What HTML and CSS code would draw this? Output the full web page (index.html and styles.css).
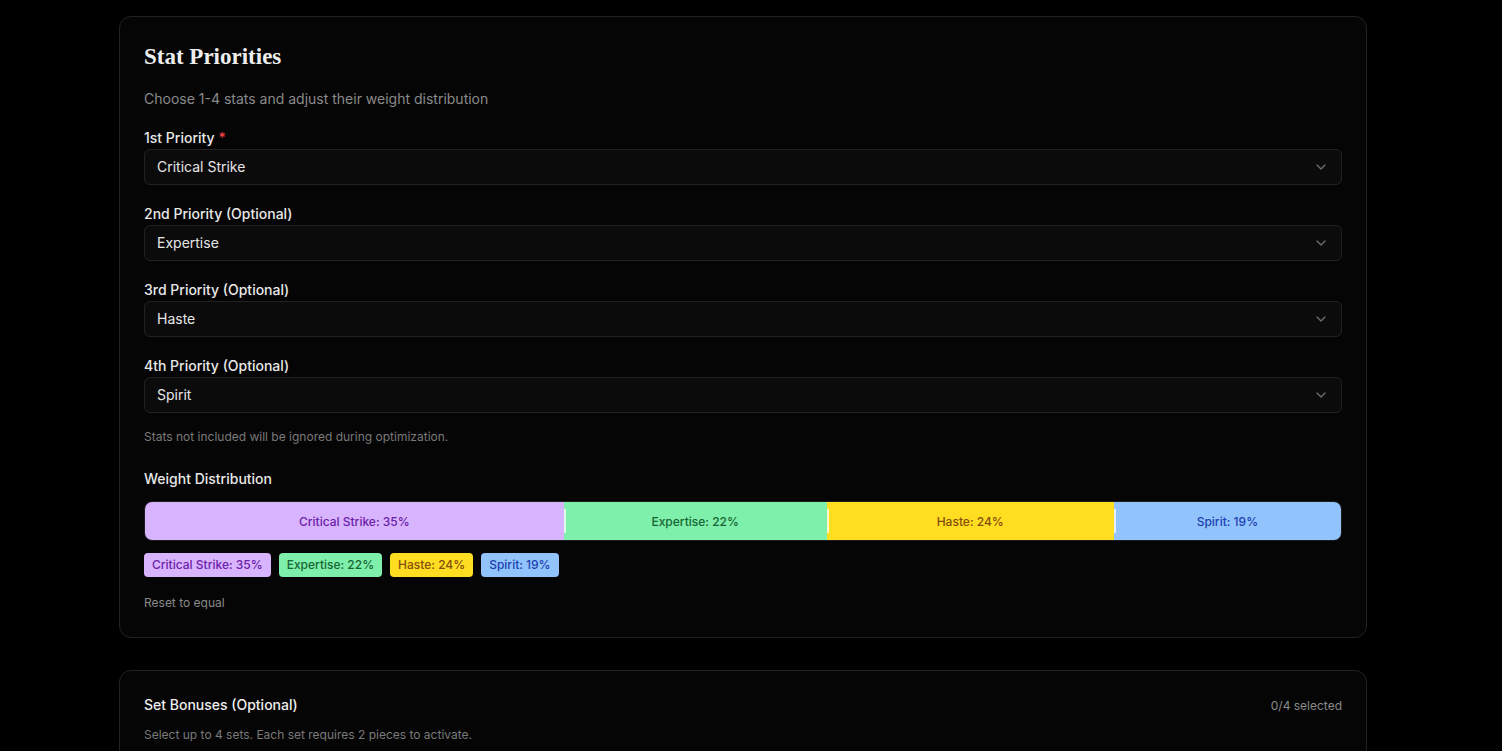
FILE: index.html
```html
<!DOCTYPE html>
<html lang="en">
<head>
  <meta charset="UTF-8" />
  <title>Stat Priorities</title>
  <link rel="stylesheet" href="styles.css">
</head>
<body>
  <div class="page">
    <section class="card">
      <h2 class="card-title">Stat Priorities</h2>
      <p class="card-desc">Choose 1-4 stats and adjust their weight distribution</p>

      <div class="field">
        <label class="field-label">1st Priority <span class="req">*</span></label>
        <div class="select">
          <span>Critical Strike</span>
          <svg class="chev" viewBox="0 0 24 24"><path d="m6 9 6 6 6-6"/></svg>
        </div>
      </div>

      <div class="field">
        <label class="field-label">2nd Priority (Optional)</label>
        <div class="select">
          <span>Expertise</span>
          <svg class="chev" viewBox="0 0 24 24"><path d="m6 9 6 6 6-6"/></svg>
        </div>
      </div>

      <div class="field">
        <label class="field-label">3rd Priority (Optional)</label>
        <div class="select">
          <span>Haste</span>
          <svg class="chev" viewBox="0 0 24 24"><path d="m6 9 6 6 6-6"/></svg>
        </div>
      </div>

      <div class="field">
        <label class="field-label">4th Priority (Optional)</label>
        <div class="select">
          <span>Spirit</span>
          <svg class="chev" viewBox="0 0 24 24"><path d="m6 9 6 6 6-6"/></svg>
        </div>
      </div>

      <p class="hint">Stats not included will be ignored during optimization.</p>

      <div class="weights">
        <div class="field-label">Weight Distribution</div>
        <div class="bar">
          <div class="seg crit" style="width: 35%">Critical Strike: 35%</div>
          <div class="seg exp" style="width: 22%"><span class="handle"></span>Expertise: 22%</div>
          <div class="seg haste" style="width: 24%"><span class="handle"></span>Haste: 24%</div>
          <div class="seg spirit" style="width: 19%"><span class="handle"></span>Spirit: 19%</div>
        </div>
        <div class="chips">
          <span class="chip crit">Critical Strike: 35%</span>
          <span class="chip exp">Expertise: 22%</span>
          <span class="chip haste">Haste: 24%</span>
          <span class="chip spirit">Spirit: 19%</span>
        </div>
        <div class="reset">Reset to equal</div>
      </div>
    </section>

    <section class="card">
      <div class="card-head">
        <div class="card-subtitle">Set Bonuses (Optional)</div>
        <div class="count">0/4 selected</div>
      </div>
      <p class="small-desc">Select up to 4 sets. Each set requires 2 pieces to activate.</p>
    </section>
  </div>
</body>
</html>
```

FILE: styles.css
```css
:root {
  --bg: #000;
  --card: #050505;
  --border: #222;
  --input: #0b0b0b;
  --text: #eeeeee;
  --muted: #8a8a8a;
}
body {
  margin: 0;
  background-color: var(--bg);
  color: var(--text);
  font-family: Inter, "Noto Sans", sans-serif;
}
.page {
  width: 1248px;
  margin-left: 119px;
  padding-top: 16px;
  display: flex;
  flex-direction: column;
  gap: 32px;
}
.card {
  background-color: var(--card);
  border: 1px solid var(--border);
  border-radius: 12px;
  padding: 24px;
}
.card-title {
  font-family: "Liberation Serif", serif;
  font-weight: 700;
  font-size: 23px;
  line-height: 32px;
  margin: 0;
  color: #eeeeee;
}
.card-desc {
  margin: 16px 0 19px;
  font-size: 14px;
  line-height: 20px;
  color: var(--muted);
}
.field {
  margin-bottom: 19px;
}
.field-label {
  display: block;
  font-size: 14px;
  line-height: 20px;
  font-weight: 500;
  margin-bottom: 1px;
  color: #e8e8e8;
}
.req {
  color: #ef4444;
}
.select {
  height: 34px;
  border: 1px solid var(--border);
  border-radius: 6px;
  background-color: var(--input);
  display: flex;
  align-items: center;
  justify-content: space-between;
  padding: 0 12px;
  font-size: 14px;
  line-height: 20px;
  color: #e6e6e6;
}
.chev {
  width: 16px;
  height: 16px;
  fill: none;
  stroke: #6f6f6f;
  stroke-width: 2;
  stroke-linecap: round;
  stroke-linejoin: round;
}
.hint {
  margin: -3px 0 24px;
  font-size: 12px;
  line-height: 16px;
  color: #7a7a7a;
}
.bar {
  margin-top: 12px;
  height: 38px;
  border: 1px solid #1c1c1c;
  border-radius: 8px;
  overflow: hidden;
  display: flex;
}
.seg {
  position: relative;
  display: flex;
  align-items: center;
  justify-content: center;
  font-size: 12px;
  font-weight: 500;
}
.handle {
  position: absolute;
  left: 0;
  top: 7px;
  bottom: 7px;
  width: 2px;
  background: rgba(255, 255, 255, 0.75);
}
.crit { background-color: #d8b4fe; color: #6b21a8; }
.exp { background-color: #7ff0ab; color: #166534; }
.haste { background-color: #ffde21; color: #854d0e; }
.spirit { background-color: #91c4fd; color: #1e40af; }
.chips {
  display: flex;
  gap: 8px;
  margin-top: 12px;
}
.chip {
  height: 24px;
  line-height: 24px;
  padding: 0 8px;
  border-radius: 4px;
  font-size: 12px;
  font-weight: 500;
}
.reset {
  margin-top: 16px;
  font-size: 12px;
  line-height: 20px;
  color: #8a8a8a;
}
.card-head {
  display: flex;
  justify-content: space-between;
  align-items: center;
}
.card-subtitle {
  font-size: 14px;
  line-height: 20px;
  font-weight: 500;
}
.count {
  font-size: 12px;
  color: var(--muted);
}
.small-desc {
  margin: 12px 0 0;
  font-size: 12px;
  line-height: 16px;
  color: #7a7a7a;
}
```
